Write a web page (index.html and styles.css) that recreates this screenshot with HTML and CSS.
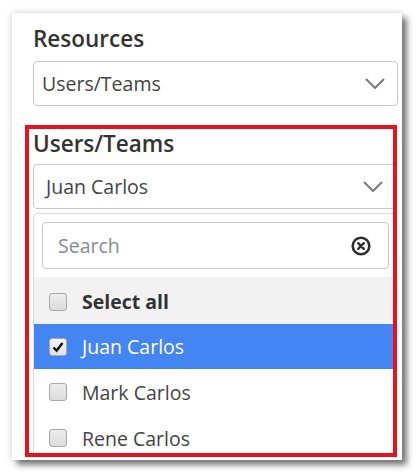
FILE: index.html
```html
<!DOCTYPE html>
<html lang="en">
<head>
<meta charset="utf-8">
<title>Resources</title>
<link rel="stylesheet" href="styles.css">
</head>
<body>
<div class="card">
  <div class="field top-field">
    <div class="label">Resources</div>
    <div class="select sel-1">
      <span class="sel-text">Users/Teams</span>
      <svg class="chev" width="20" height="11" viewBox="0 0 20 11"><polyline points="1,1 10,10 19,1" fill="none" stroke="#7a7a7a" stroke-width="2"/></svg>
    </div>
  </div>
  <div class="annot">
    <div class="annot-inner">
      <div class="label">Users/Teams</div>
      <div class="select sel-2">
        <span class="sel-text">Juan Carlos</span>
        <svg class="chev" width="20" height="11" viewBox="0 0 20 11"><polyline points="1,1 10,10 19,1" fill="none" stroke="#7a7a7a" stroke-width="2"/></svg>
      </div>
      <div class="panel">
        <div class="search">
          <span class="placeholder">Search</span>
          <svg class="clear" width="20" height="20" viewBox="0 0 20 20"><circle cx="10" cy="10" r="8.3" fill="none" stroke="#2e2e2e" stroke-width="2.6"/><path d="M7.2 7.2 L12.8 12.8 M12.8 7.2 L7.2 12.8" stroke="#2e2e2e" stroke-width="2.4" stroke-linecap="round"/></svg>
        </div>
        <div class="list">
          <div class="row row-all"><span class="cb"></span><span class="txt bold">Select all</span></div>
          <div class="row row-sel"><span class="cb cb-on"><svg width="14" height="14" viewBox="0 0 14 14"><path d="M2.5 7.5 L5.6 10.6 L11.5 3" fill="none" stroke="#111" stroke-width="2.4"/></svg></span><span class="txt">Juan Carlos</span></div>
          <div class="row"><span class="cb"></span><span class="txt">Mark Carlos</span></div>
          <div class="row"><span class="cb"></span><span class="txt">Rene Carlos</span></div>
        </div>
      </div>
    </div>
  </div>
</div>
</body>
</html>
```

FILE: styles.css
```css
* { box-sizing: border-box; }
html, body { margin: 0; padding: 0; background: #fff; }
body {
  font-family: "Open Sans", "Noto Sans", sans-serif;
  width: 416px;
  height: 475px;
  overflow: hidden;
}
.card {
  margin: 13px 0 0 12px;
  width: 390px;
  height: 447px;
  background: #fff;
  box-shadow: 5px 5px 6px rgba(0,0,0,0.5), 0 0 7px rgba(0,0,0,0.18);
  padding: 11px 5px 0 13px;
  overflow: hidden;
}
.top-field { padding-left: 8px; margin-right: -1px; }
.label {
  font-size: 22.5px;
  font-weight: 600;
  line-height: 30px;
  color: #333;
}
.select {
  display: flex;
  align-items: center;
  justify-content: space-between;
  height: 45px;
  width: 365px;
  border: 1px solid #c9c9c9;
  border-radius: 4px;
  background: #fff;
  font-size: 19.5px;
  color: #444;
}
.sel-1 { margin-top: 7px; padding: 0 12px 0 8px; }
.sel-2 { margin-top: 5px; padding: 0 14px 0 12px; }
.annot {
  margin-top: 19px;
  width: 372px;
  height: 332px;
  border: 4px solid #e5131d;
  overflow: hidden;
}
.annot-inner { padding-left: 4px; }
.panel {
  margin-top: 4px;
  width: 365px;
  border: 1px solid #d9d9d9;
  border-bottom: none;
  border-top-left-radius: 5px;
  padding-top: 8px;
}
.search {
  margin: 0 8px;
  height: 47px;
  border: 1px solid #c9c9c9;
  border-radius: 4px;
  display: flex;
  align-items: center;
  justify-content: space-between;
  padding: 0 17px 0 15px;
}
.placeholder { font-size: 19.5px; color: #8a8a8a; }
.clear { display: block; }
.list { margin-top: 8px; }
.row {
  display: flex;
  align-items: center;
  height: 46px;
  padding-left: 15px;
  font-size: 19.5px;
  color: #444;
}
.row-all { height: 47px; background: #f2f2f2; padding-top: 2px; }
.row-sel { height: 45px; background: #4385f3; color: #fff; }
.cb {
  width: 18px;
  height: 18px;
  border: 1px solid #a9a9a9;
  border-radius: 3px;
  background: linear-gradient(#ececec, #dcdcdc);
  margin-right: 15px;
  display: flex;
  align-items: center;
  justify-content: center;
  flex: none;
}
.cb-on { background: linear-gradient(#f4f4f4, #e2e2e2); }
.bold { font-weight: 700; color: #333; }
```
